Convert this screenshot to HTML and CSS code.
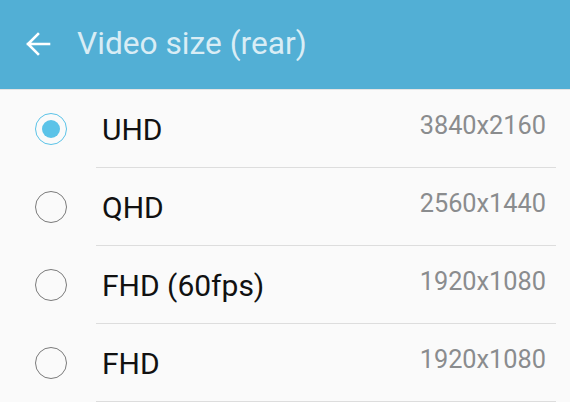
FILE: index.html
```html
<!DOCTYPE html>
<html>
<head>
<meta charset="utf-8">
<link rel="stylesheet" href="styles.css">
</head>
<body>
<div class="app">
  <header class="bar">
    <svg class="back" width="26" height="26" viewBox="0 0 26 26">
      <path d="M24 13H3M13 3L3 13l10 10" fill="none" stroke="#ffffff" stroke-width="2.6" stroke-linecap="square"/>
    </svg>
    <span class="title">Video size (rear)</span>
  </header>
  <ul class="list">
    <li class="row">
      <span class="radio on"></span>
      <div class="content"><span class="label">UHD</span><span class="value">3840x2160</span></div>
    </li>
    <li class="row">
      <span class="radio"></span>
      <div class="content"><span class="label">QHD</span><span class="value">2560x1440</span></div>
    </li>
    <li class="row">
      <span class="radio"></span>
      <div class="content"><span class="label">FHD (60fps)</span><span class="value">1920x1080</span></div>
    </li>
    <li class="row">
      <span class="radio"></span>
      <div class="content"><span class="label">FHD</span><span class="value">1920x1080</span></div>
    </li>
  </ul>
</div>
</body>
</html>
```

FILE: styles.css
```css
* { box-sizing: border-box; }
html, body { margin: 0; padding: 0; }
body {
  width: 570px;
  height: 402px;
  overflow: hidden;
  background: #fafafa;
  font-family: Roboto, "Noto Sans", sans-serif;
}
.app { display: flex; flex-direction: column; }
.bar {
  height: 90px;
  background: #52afd5;
  border-bottom: 1px solid #e4e4e4;
  display: flex;
  align-items: center;
  padding-left: 25px;
}
.back { flex: none; margin-top: -1px; }
.title {
  margin-left: 26px;
  font-size: 31.7px;
  color: rgba(255, 255, 255, 0.78);
  margin-top: -2px;
}
.list { list-style: none; margin: 0; padding: 0; }
.row {
  display: flex;
  align-items: stretch;
  height: 78px;
}
.radio {
  flex: none;
  width: 32px;
  height: 32px;
  margin: 0 29px 0 35px;
  align-self: center;
  border-radius: 50%;
  border: 1.8px solid #7a7a7a;
  position: relative;
  margin-top: -1px;
}
.radio.on { border-color: #5bc3e8; }
.radio.on::after {
  content: "";
  position: absolute;
  left: 50%;
  top: 50%;
  width: 18px;
  height: 18px;
  margin: -9px 0 0 -9px;
  border-radius: 50%;
  background: #5bc3e8;
}
.content {
  flex: 1;
  margin-right: 14px;
  border-bottom: 1px solid #dddddd;
  display: flex;
  align-items: center;
  justify-content: space-between;
  padding: 0 10px 0 6px;
}
.label {
  font-size: 30px;
  color: #111111;
  margin-top: 1px;
}
.value {
  font-size: 25.3px;
  color: #8a8c8e;
  margin-top: -6px;
}
```
